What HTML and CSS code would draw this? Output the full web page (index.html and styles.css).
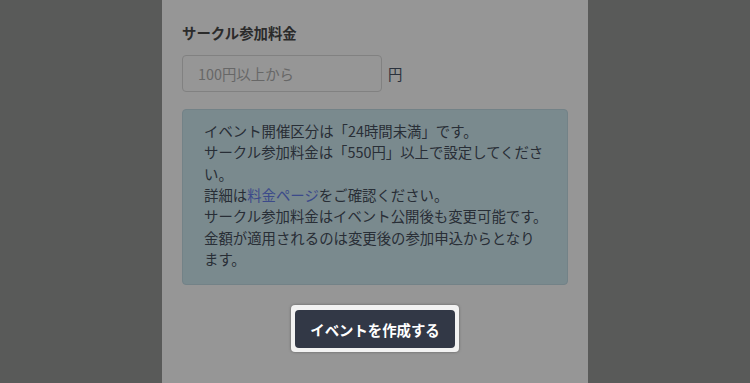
FILE: index.html
```html
<!DOCTYPE html>
<html lang="ja">
<head>
    <meta charset="UTF-8">
    <meta name="viewport" content="width=device-width, initial-scale=1.0">
    <title>イベント作成</title>
    <link rel="stylesheet" href="styles.css">
</head>
<body>
    <div class="panel">
        <div class="form-group">
            <label for="circle-fee" class="form-label">サークル参加料金</label>
            <div class="fee-row">
                <input type="text" id="circle-fee" class="fee-input" placeholder="100円以上から">
                <span class="unit">円</span>
            </div>
        </div>

        <div class="info-box">
            イベント開催区分は「24時間未満」です。<br>
            サークル参加料金は「550円」以上で設定してください。<br>
            詳細は<a href="#" class="link">料金ページ</a>をご確認ください。<br>
            サークル参加料金はイベント公開後も変更可能です。<br>
            金額が適用されるのは変更後の参加申込からとなり<span class="nowrap">ます。</span>
        </div>

        <!-- Tour spotlight on the submit button -->
        <div class="actions">
            <div class="spotlight">
                <button class="submit">イベントを作成する</button>
            </div>
        </div>
    </div>
</body>
</html>
```

FILE: styles.css
```css
body {
    font-family: "Noto Sans CJK JP", "Noto Sans", sans-serif;
    margin: 0;
    background-color: #979a98;
    color: #4a5568;
    height: 383px;
    overflow: hidden;
}

.panel {
    width: 426px;
    height: 383px;
    margin: 0 auto;
    background-color: #fff;
    padding: 22px 20px 0;
    box-sizing: border-box;
}

.form-label {
    display: block;
    font-size: 14.4px;
    font-weight: bold;
    line-height: 21px;
    color: #4a4a4a;
    margin-bottom: 12px;
}

.fee-row {
    display: flex;
    align-items: center;
}

.fee-input {
    width: 200px;
    height: 37px;
    box-sizing: border-box;
    padding: 0 15px;
    border: 1px solid #dcdcdc;
    border-radius: 4px;
    font-family: inherit;
    font-size: 14.4px;
    color: #4a5568;
}

.fee-input::placeholder {
    color: #b0b0b0;
}

.unit {
    margin-left: 6px;
    font-size: 14.4px;
    color: #4a5568;
}

.info-box {
    margin-top: 17px;
    background-color: #d0eaf2;
    border: 1px solid #c3dde6;
    border-radius: 4px;
    padding: 10px 16px 15px 21px;
    font-size: 14.4px;
    line-height: 21.33px;
    color: #454f5c;
}

.nowrap {
    white-space: nowrap;
}

.link {
    color: #667eea;
    text-decoration: none;
}

.actions {
    display: flex;
    justify-content: center;
    margin-top: 20px;
}

.spotlight {
    position: relative;
    z-index: 1;
    padding: 5px 4px 4px;
    background-color: #f2f2f2;
    border-radius: 4px;
    box-shadow: 0 0 3px rgba(0, 0, 0, 0.35), 0 0 0 2000px rgba(0, 0, 0, 0.41);
}

.submit {
    display: block;
    width: 160px;
    height: 38px;
    background-color: #323846;
    color: #fff;
    border: none;
    border-radius: 4px;
    font-family: inherit;
    font-size: 14.4px;
    font-weight: bold;
    cursor: pointer;
}
```
